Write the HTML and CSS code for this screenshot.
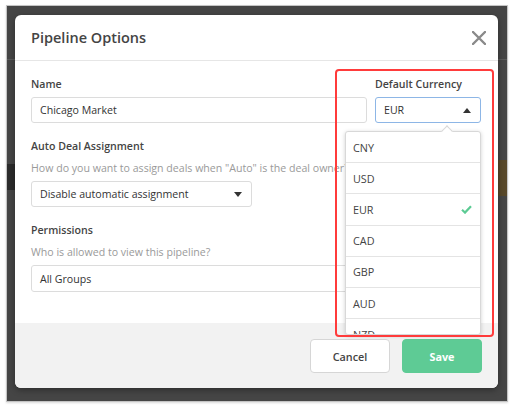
FILE: index.html
```html
<!DOCTYPE html>
<html>
<head>
<meta charset="utf-8">
<link rel="stylesheet" href="styles.css">
</head>
<body>
<div class="frame">
  <div class="modal">
    <div class="modal-header">
      <h1 class="title">Pipeline Options</h1>
      <svg class="close" width="14" height="14" viewBox="0 0 14 14"><path d="M1 1L13 13M13 1L1 13" stroke="#8a8a8a" stroke-width="2.4" stroke-linecap="round"/></svg>
    </div>
    <div class="modal-body">
      <div class="row">
        <div class="field field-name">
          <label class="label">Name</label>
          <div class="input">Chicago Market</div>
        </div>
        <div class="field field-currency">
          <label class="label">Default Currency</label>
          <div class="input select active">
            <span>EUR</span>
            <span class="caret up"></span>
          </div>
          <div class="dropdown">
            <span class="notch"></span>
            <div class="menu">
              <div class="item">CNY</div>
              <div class="item">USD</div>
              <div class="item">EUR
                <svg class="check" width="11" height="9" viewBox="0 0 11 9"><path d="M1 4.8L4 7.6L10 1.2" fill="none" stroke="#5ccb94" stroke-width="2.2"/></svg>
              </div>
              <div class="item">CAD</div>
              <div class="item">GBP</div>
              <div class="item">AUD</div>
              <div class="item">NZD</div>
            </div>
          </div>
        </div>
      </div>
      <div class="section">
        <label class="label">Auto Deal Assignment</label>
        <p class="help">How do you want to assign deals when "Auto" is the deal owner?</p>
        <div class="input select short">
          <span>Disable automatic assignment</span>
          <span class="caret down"></span>
        </div>
      </div>
      <div class="section">
        <label class="label">Permissions</label>
        <p class="help">Who is allowed to view this pipeline?</p>
        <div class="input tall">All Groups</div>
      </div>
    </div>
    <div class="modal-footer">
      <button class="btn btn-cancel">Cancel</button>
      <button class="btn btn-save">Save</button>
    </div>
    <div class="annotation"></div>
  </div>
</div>
</body>
</html>
```

FILE: styles.css
```css
* { box-sizing: border-box; }
html, body { margin: 0; padding: 0; background: #ffffff; }
body {
  font-family: "Open Sans", "DejaVu Sans", sans-serif;
  width: 514px;
  height: 407px;
  overflow: hidden;
}
.frame {
  margin: 5px 0 0 6px;
  width: 502px;
  height: 397px;
  border: 1px solid #c4c4c4;
  box-shadow: 0 1px 2px rgba(0,0,0,0.15);
  padding: 9px 9px 0 8px;
  background:
    linear-gradient(#2b2b2b, #2b2b2b) left 0 top 158px / 14px 26px no-repeat,
    linear-gradient(#58482a, #58482a) right 0 top 154px / 14px 36px no-repeat,
    linear-gradient(#5a5a5a, #5a5a5a) left 0 top 53px / 14px 1px no-repeat,
    linear-gradient(#5a5a5a, #5a5a5a) right 0 top 53px / 14px 1px no-repeat,
    #454545;
}
.modal {
  position: relative;
  width: 483px;
  height: 373px;
  background: #ffffff;
  border-radius: 6px;
  overflow: hidden;
  display: flex;
  flex-direction: column;
  box-shadow: 0 2px 6px rgba(0,0,0,0.35);
}
.modal-header {
  height: 46px;
  flex: none;
  border-bottom: 1px solid #e6e6e6;
  display: flex;
  align-items: center;
  justify-content: space-between;
  padding: 0 12px 0 16px;
}
.title {
  margin: 0 0 1px;
  font-size: 14.5px;
  font-weight: 600;
  color: #444;
  letter-spacing: 0;
}
.close { display: block; margin-top: 1px; }
.modal-body {
  flex: 1;
  padding: 14px 17px 0 16px;
}
.row { display: flex; gap: 8px; }
.field-name { flex: 1; }
.field-currency { width: 106px; flex: none; position: relative; }
.label {
  display: block;
  font-size: 10.6px;
  line-height: 18px;
  font-weight: 600;
  color: #444;
  margin-bottom: 4px;
}
.field-currency .label { white-space: nowrap; }
.input {
  height: 26px;
  border: 1px solid #dcdcdc;
  border-radius: 3px;
  padding: 0 8px;
  font-size: 10.6px;
  color: #333;
  display: flex;
  align-items: center;
  justify-content: space-between;
  background: #fff;
}
.input.active { border-color: #8db6e6; }
.input.short { width: 221px; }
.input.tall { height: 27px; }
.caret { width: 0; height: 0; border-left: 4px solid transparent; border-right: 4px solid transparent; margin-right: 1px; }
.caret.up { border-bottom: 5px solid #333; }
.caret.down { border-top: 5px solid #333; }
.section { margin-top: 14px; }
.help {
  margin: 0 0 4px;
  font-size: 10.6px;
  line-height: 18px;
  color: #9a9a9a;
}
.dropdown {
  position: absolute;
  left: -30px;
  top: 56px;
  width: 136px;
  z-index: 2;
}
.notch {
  position: absolute;
  right: 30px;
  top: -4px;
  width: 8px;
  height: 8px;
  background: #fff;
  border-left: 1px solid #d8d8d8;
  border-top: 1px solid #d8d8d8;
  transform: rotate(45deg);
  z-index: 1;
}
.menu {
  height: 204px;
  background: #fff;
  border: 1px solid #d8d8d8;
  border-radius: 3px;
  box-shadow: 0 1px 4px rgba(0,0,0,0.18);
  overflow: hidden;
}
.item {
  height: 31.2px;
  border-bottom: 1px solid #e4e4e4;
  display: flex;
  align-items: center;
  justify-content: space-between;
  padding: 0 8px 0 7px;
  font-size: 10.8px;
  color: #444;
}
.check { display: block; }
.modal-footer {
  height: 65px;
  flex: none;
  background: #f2f2f2;
  display: flex;
  justify-content: flex-end;
  align-items: flex-start;
  gap: 12px;
  padding: 16px 16px 0 0;
}
.btn {
  width: 80px;
  height: 34px;
  border-radius: 4px;
  font-family: inherit;
  font-size: 10.8px;
  font-weight: 600;
}
.btn-cancel { background: #fff; border: 1px solid #d6d6d6; color: #444; }
.btn-save { background: #5ecb95; border: 1px solid #5ecb95; color: #fff; font-weight: 700; }
.annotation {
  position: absolute;
  left: 320px;
  top: 54px;
  width: 159px;
  height: 268px;
  border: 2.5px solid #ff3b3b;
  border-radius: 4px;
  z-index: 3;
  pointer-events: none;
}
```
